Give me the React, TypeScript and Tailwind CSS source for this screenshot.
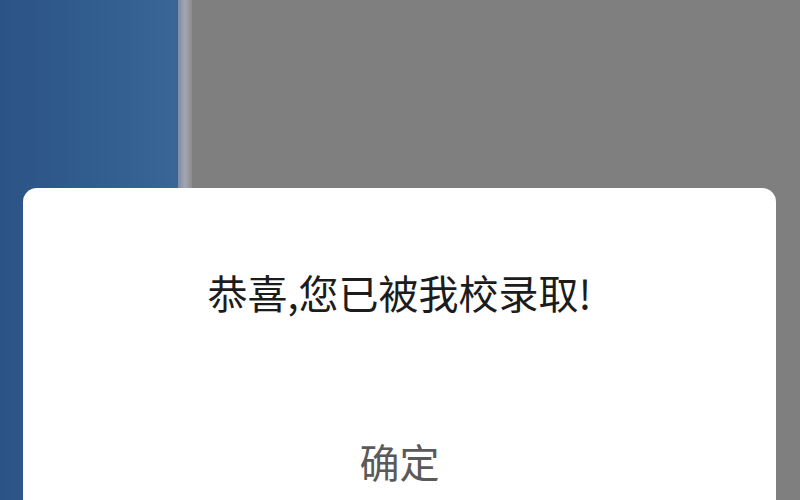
export default function App() {
  return (
    <div className="relative h-[500px] w-[800px] overflow-hidden bg-[#7f7f7f] font-['Noto_Sans_CJK_SC',sans-serif]">
      <div className="flex h-full">
        <div className="h-full w-[178px] bg-gradient-to-r from-[#2c5386] via-[#315c8e] to-[#3a6597]" />
        <div className="h-full w-[14px] bg-gradient-to-r from-[#7e8aa3] via-[#a3a7b2] to-[#8c8c8e]" />
        <div className="h-full flex-1 bg-[#7f7f7f]" />
      </div>

      <div className="absolute left-[23px] top-[188px] h-[340px] w-[753px] rounded-[14px] bg-white">
        <div className="flex flex-col items-center">
          <p className="mt-[80px] text-[40px] leading-[48px] text-[#1c1c1c]">恭喜,您已被我校录取!</p>
          <button className="mt-[121px] text-[40px] leading-[48px] text-[#5a5a5a]">确定</button>
        </div>
      </div>
    </div>
  )
}
